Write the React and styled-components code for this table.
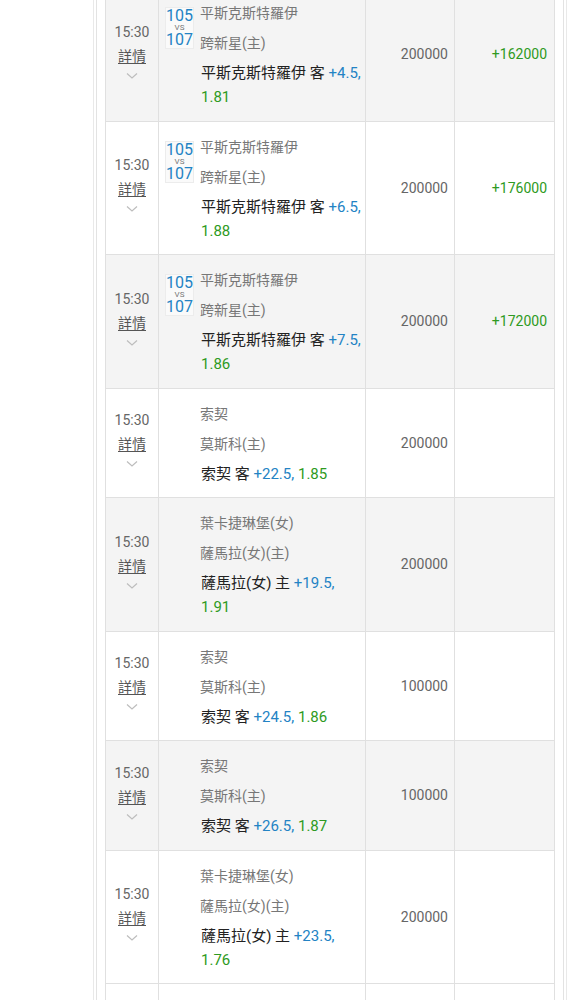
import React from "react";
import styled, { createGlobalStyle } from "styled-components";

const GlobalStyle = createGlobalStyle`
  html, body { margin: 0; padding: 0; background: #ffffff; }
  body {
    font-family: Roboto, "Noto Sans CJK TC", "Noto Sans", sans-serif;
    overflow: hidden;
  }
`;

const Page = styled.div`
  width: 583px;
  height: 1000px;
  overflow: hidden;
  background: #fff;
`;

const Panel = styled.div`
  margin-left: 93px;
  width: 474px;
  min-height: 1020px;
  box-sizing: border-box;
  border-left: 1px solid #e9e9e9;
  border-right: 1px solid #e9e9e9;
  padding: 0 2px;
`;

const PanelInner = styled.div`
  min-height: 1020px;
  box-sizing: border-box;
  border-left: 1px solid #e3e3e3;
  border-right: 1px solid #e3e3e3;
  padding: 0 8px;
`;

const Table = styled.div`
  margin-top: -12px;
  border-left: 1px solid #e0e0e0;
  border-right: 1px solid #e0e0e0;
  width: 450px;
  box-sizing: border-box;
`;

const Row = styled.div`
  display: grid;
  grid-template-columns: 53px 207px 89px 1fr;
  background: ${(p) => (p.$gray ? "#f4f4f4" : "#ffffff")};
  border-bottom: 1px solid #e0e0e0;
  min-height: ${(p) => (p.$empty ? "40px" : "0")};
`;

const Cell = styled.div`
  border-right: ${(p) => (p.$last ? "none" : "1px solid #e0e0e0")};
  box-sizing: border-box;
`;

const TimeCell = styled(Cell)`
  display: flex;
  flex-direction: column;
  align-items: center;
  justify-content: center;
  padding-bottom: 9px;
`;

const Time = styled.div`
  font-size: 14px;
  line-height: 24px;
  color: #666;
`;

const Detail = styled.a`
  font-size: 14px;
  line-height: 24px;
  color: #555;
  text-decoration: underline;
  text-underline-offset: 2px;
  cursor: pointer;
`;

const Chevron = styled.svg`
  display: block;
  margin-top: 4px;
`;

const MatchCell = styled(Cell)`
  display: grid;
  grid-template-columns: 28px 1fr;
  column-gap: 7px;
  padding: 10px 0 11.5px 6px;
`;

const Badge = styled.div`
  margin-top: 9px;
  align-self: start;
  border: 1px solid #ececec;
  background: #fafafa;
  display: flex;
  flex-direction: column;
  align-items: center;
  color: #2383c4;
  width: 29px;
  box-sizing: border-box;
`;

const Score = styled.span`
  font-size: 16px;
  line-height: 16px;
`;

const Vs = styled.span`
  font-size: 8px;
  line-height: 8px;
  color: #777;
`;

const Teams = styled.div`
  display: flex;
  flex-direction: column;
`;

const Team = styled.div`
  font-size: 14px;
  line-height: 30px;
  color: #777;
  white-space: nowrap;
`;

const Bet = styled.div`
  margin-top: 3px;
  padding-left: 1px;
  font-size: 15px;
  line-height: 24px;
  color: #222;
  white-space: nowrap;
`;

const Handicap = styled.span`
  color: #2383c4;
`;

const Odds = styled.span`
  color: #2e9a22;
  display: ${(p) => (p.$wrap ? "block" : "inline")};
`;

const NumCell = styled(Cell)`
  display: flex;
  align-items: center;
  justify-content: flex-end;
  padding-right: ${(p) => (p.$last ? "7px" : "6px")};
  font-size: 14px;
  color: ${(p) => (p.$win ? "#2e9a22" : "#666")};
`;

const rows = [
  { badge: true, t1: "平斯克斯特羅伊", t2: "跨新星(主)", pick: "平斯克斯特羅伊", side: "客", hcp: "+4.5", odds: "1.81", wrap: true, amt: "200000", win: "+162000" },
  { badge: true, t1: "平斯克斯特羅伊", t2: "跨新星(主)", pick: "平斯克斯特羅伊", side: "客", hcp: "+6.5", odds: "1.88", wrap: true, amt: "200000", win: "+176000" },
  { badge: true, t1: "平斯克斯特羅伊", t2: "跨新星(主)", pick: "平斯克斯特羅伊", side: "客", hcp: "+7.5", odds: "1.86", wrap: true, amt: "200000", win: "+172000" },
  { t1: "索契", t2: "莫斯科(主)", pick: "索契", side: "客", hcp: "+22.5", odds: "1.85", amt: "200000", win: "" },
  { t1: "葉卡捷琳堡(女)", t2: "薩馬拉(女)(主)", pick: "薩馬拉(女)", side: "主", hcp: "+19.5", odds: "1.91", wrap: true, amt: "200000", win: "" },
  { t1: "索契", t2: "莫斯科(主)", pick: "索契", side: "客", hcp: "+24.5", odds: "1.86", amt: "100000", win: "" },
  { t1: "索契", t2: "莫斯科(主)", pick: "索契", side: "客", hcp: "+26.5", odds: "1.87", amt: "100000", win: "" },
  { t1: "葉卡捷琳堡(女)", t2: "薩馬拉(女)(主)", pick: "薩馬拉(女)", side: "主", hcp: "+23.5", odds: "1.76", wrap: true, amt: "200000", win: "" },
];

function ChevronDown() {
  return (
    <Chevron width="12" height="8" viewBox="0 0 12 8">
      <polyline points="1,1.5 6,6 11,1.5" fill="none" stroke="#bdbdbd" strokeWidth="1.2" />
    </Chevron>
  );
}

export default function App() {
  return (
    <Page>
      <GlobalStyle />
      <Panel>
        <PanelInner>
          <Table>
            {rows.map((r, i) => (
              <Row key={i} $gray={i % 2 === 0}>
                <TimeCell>
                  <Time>15:30</Time>
                  <Detail>詳情</Detail>
                  <ChevronDown />
                </TimeCell>
                <MatchCell>
                  {r.badge ? (
                    <Badge>
                      <Score>105</Score>
                      <Vs>VS</Vs>
                      <Score>107</Score>
                    </Badge>
                  ) : (
                    <span />
                  )}
                  <Teams>
                    <Team>{r.t1}</Team>
                    <Team>{r.t2}</Team>
                    <Bet>
                      {r.pick} {r.side} <Handicap>{r.hcp},</Handicap> <Odds $wrap={r.wrap}>{r.odds}</Odds>
                    </Bet>
                  </Teams>
                </MatchCell>
                <NumCell>{r.amt}</NumCell>
                <NumCell $last $win>{r.win}</NumCell>
              </Row>
            ))}
            <Row $empty>
              <Cell />
              <Cell />
              <Cell />
              <Cell $last />
            </Row>
          </Table>
        </PanelInner>
      </Panel>
    </Page>
  );
}
